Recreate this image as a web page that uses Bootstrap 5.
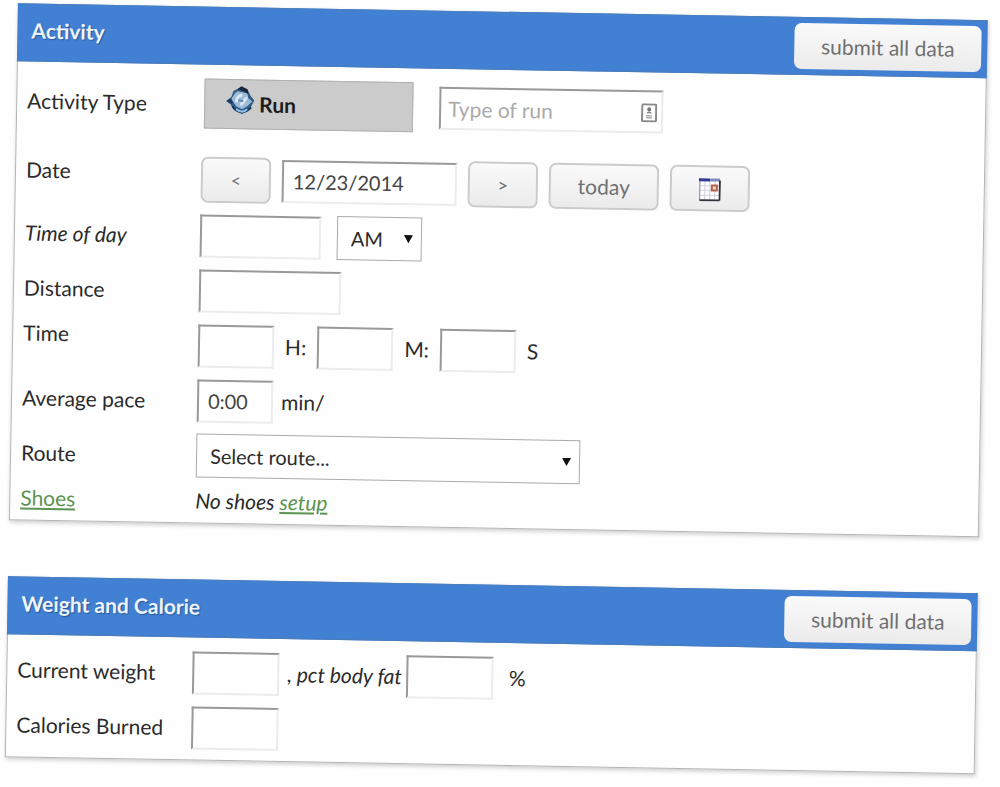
<!DOCTYPE html>
<html lang="en">
<head>
<meta charset="utf-8">
<meta name="viewport" content="width=device-width, initial-scale=1">
<title>Activity log</title>
<link href="https://cdn.jsdelivr.net/npm/bootstrap@5.3.0/dist/css/bootstrap.min.css" rel="stylesheet">
<style>
body { background: #fefefe; color: #2b2b2b; font: 21px/24px Lato, sans-serif; }
.log-form { padding: 3px 12px 12px 18px; gap: 56px; transform: rotate(1deg); transform-origin: 0 0; }
.panel { border: 1px solid #b4b4b4; border-top: 0; box-shadow: 1px 2px 4px rgba(0,0,0,.2); background: #fefefe; }
.panel-title { background: #4180d2; height: 58px; margin: 0 -1px; padding: 0 6px 0 14px; border-top: 1px solid #4b7fc0; border-bottom: 1px solid #4b7cb8; }
.panel-title h2 { font-size: 21px; line-height: 24px; font-weight: 700; color: #eef5ff; text-shadow: 1px 1px 1px rgba(20,50,100,.5); }
.panel-rows { padding: 13px 10px 10px; gap: 11px; }
.field-set { gap: 11px; }
.entry { min-height: 44px; }
.entry-name { width: 175px; flex: none; }
.entry-tall { min-height: 52px; margin-bottom: 16px; }
.entry-short { min-height: 24px; }
.soft-btn { height: 46px; border: 2px solid #cbcbcb; border-radius: 7px; background: linear-gradient(#fafafa, #ebebeb); color: #707070; font-size: 21px; line-height: 24px; padding: 0; }
.soft-btn:hover { background: #e9e9e9; color: #555; border-color: #bbb; }
.w-step { width: 70px; font-size: 18px; }
.w-today { width: 110px; }
.w-cal { width: 80px; }
.w-submit { width: 187px; border: 0; }
.sunk { height: 43px; border: 2px solid; border-color: #999 #ececec #ececec #999; border-radius: 0; background: #fff; color: #444; font-size: 20px; padding: 0 9px; }
.sunk::placeholder { color: #aaa; opacity: 1; }
.w-76 { width: 76px; }
.w-87 { width: 87px; }
.w-121 { width: 121px; }
.w-142 { width: 142px; }
.w-date { width: 175px; }
.w-kind { width: 224px; padding: 0 32px 0 7px; font-size: 21px; }
.kind-icon { right: 6px; top: 13px; }
.run-group { gap: 26px; margin-left: 2px; }
.run-btn { width: 209px; height: 50px; border: 1px solid #b0b0b0; background: #cbcbcb; color: #1c1c1c; font-weight: 700; font-size: 21px; line-height: 24px; padding: 0 20px; }
.pick { height: 44px; border: 1px solid #aaa; background: #fff; color: #2b2b2b; font-size: 20px; padding: 0 13px; appearance: none; }
.pick-mark { right: 8px; top: 17px; pointer-events: none; }
.w-ampm { width: 85px; }
.w-route { width: 384px; max-width: 100%; }
.log-form a { color: #5d9453; }
</style>
</head>
<body class="min-vh-100">
<form class="log-form d-flex flex-column">
  <section class="panel">
    <div class="panel-title d-flex align-items-center justify-content-between">
      <h2 class="m-0 pb-1">Activity</h2>
      <button type="button" class="soft-btn w-submit">submit all data</button>
    </div>
    <div class="panel-rows d-flex flex-column">
      <div class="entry entry-tall d-flex align-items-center">
        <span class="entry-name">Activity Type</span>
        <div class="run-group d-flex align-items-center">
          <button type="button" class="run-btn d-flex align-items-center">
            <svg width="30" height="30" viewBox="0 0 30 30" class="mb-2 me-1" aria-hidden="true">
              <path d="M1 16 6 12 8 6 15 2 22 4 25 10 29 15 25 23 17 29 9 25 5 19Z" fill="#315a87"/>
              <path d="M1 16 6 13 9 16 6 19Z" fill="#1f3c60"/>
              <path d="M6 14 9 9 12 6 17 7 22 8 23 13 27 16 22 21 17 24 11 21 8 17Z" fill="#9dbbd7"/>
              <path d="M12 4 16 1 22 4 23 9 18 6Z" fill="#18263a"/>
              <path d="M11 17c0-5 3-7 6-7M15 19c4 0 3-6 7-6" fill="none" stroke="#dbe9f6" stroke-width="3"/>
              <path d="M13 15l5 1" stroke="#6b8db0" stroke-width="2"/>
              <path d="M7 21c5 7 13 8 19 1" fill="none" stroke="#17375c" stroke-width="2"/>
              <path d="M11 24c4 3 8 3 11 0" fill="none" stroke="#8fc0e4" stroke-width="2"/>
            </svg>Run
          </button>
          <div class="position-relative">
            <input class="sunk w-kind" type="text" placeholder="Type of run" aria-label="Type of run">
            <svg class="kind-icon position-absolute" width="16" height="19" viewBox="0 0 16 19" aria-hidden="true">
              <rect x="1" y="1" width="14" height="17" rx="1" fill="#fff" stroke="#888" stroke-width="2"/>
              <circle cx="8" cy="6" r="2" fill="#777"/><path d="M5 10q3-4 6 0zM5 12h6v1H5zM5 14h6v1H5z" fill="#888"/>
            </svg>
          </div>
        </div>
      </div>
      <div class="entry d-flex align-items-center">
        <label class="entry-name align-self-start pt-1" for="date">Date</label>
        <div class="field-set d-flex align-items-center">
          <button type="button" class="soft-btn w-step" aria-label="Previous day">&lt;</button>
          <input class="sunk w-date" id="date" type="text" value="12/23/2014">
          <button type="button" class="soft-btn w-step" aria-label="Next day">&gt;</button>
          <button type="button" class="soft-btn w-today">today</button>
          <button type="button" class="soft-btn w-cal" aria-label="Choose a date">
            <svg width="22" height="24" viewBox="0 0 22 24" aria-hidden="true">
              <path d="M1 1h20v22H1z" fill="#fff"/>
              <path d="M1 8.500h20M1 13h20M1 18h20M6 3v20M11 3v20M16 3v20" stroke="#d3cfdd"/>
              <path d="M1 1v22" stroke="#8585a8"/>
              <path d="M0 1h11v3H0z" fill="#303a93"/><path d="M11 1h10v3H11z" fill="#8189bf"/>
              <path d="M21 3v20M1 23h20" stroke="#36323b" stroke-width="2"/>
              <rect x="13" y="8" width="5" height="5" fill="#f0dfc0" stroke="#b8604e" stroke-width="2"/>
            </svg>
          </button>
        </div>
      </div>
      <div class="entry d-flex align-items-center">
        <label class="entry-name" for="tod"><em>Time of day</em></label>
        <input class="sunk w-121 me-3" id="tod" type="text">
        <div class="position-relative">
          <select class="pick w-ampm" aria-label="AM or PM"><option>AM</option><option>PM</option></select>
          <svg class="pick-mark position-absolute" width="10" height="10" viewBox="0 0 10 10" aria-hidden="true"><path d="M0 1h9L4.500 9z" fill="#111"/></svg>
        </div>
      </div>
      <div class="entry d-flex align-items-center">
        <label class="entry-name" for="dist">Distance</label>
        <input class="sunk w-142" id="dist" type="text">
      </div>
      <div class="entry d-flex align-items-center">
        <label class="entry-name align-self-start" for="hh">Time</label>
        <div class="field-set d-flex align-items-center">
          <input class="sunk w-76" id="hh" type="text"><label for="hh">H:</label>
          <input class="sunk w-76" id="mm" type="text"><label for="mm">M:</label>
          <input class="sunk w-76" id="ss" type="text"><label for="ss">S</label>
        </div>
      </div>
      <div class="entry d-flex align-items-center">
        <label class="entry-name" for="pace">Average pace</label>
        <input class="sunk w-76 me-2" id="pace" type="text" value="0:00"><span>min/</span>
      </div>
      <div class="entry d-flex align-items-center">
        <label class="entry-name" for="route">Route</label>
        <div class="position-relative">
          <select class="pick w-route" id="route"><option>Select route...</option></select>
          <svg class="pick-mark position-absolute" width="10" height="10" viewBox="0 0 10 10" aria-hidden="true"><path d="M0 1h9L4.500 9z" fill="#111"/></svg>
        </div>
      </div>
      <div class="entry-short d-flex align-items-center">
        <span class="entry-name"><a href="#">Shoes</a></span>
        <em>No shoes <a href="#">setup</a></em>
      </div>
    </div>
  </section>
  <section class="panel">
    <div class="panel-title d-flex align-items-center justify-content-between">
      <h2 class="m-0 pb-1">Weight and Calorie</h2>
      <button type="button" class="soft-btn w-submit">submit all data</button>
    </div>
    <div class="panel-rows d-flex flex-column">
      <div class="entry d-flex align-items-center">
        <label class="entry-name" for="weight">Current weight</label>
        <input class="sunk w-87 me-2" id="weight" type="text">
        <label for="fat"><em>, pct body fat</em></label>
        <input class="sunk w-87 ms-1 me-3" id="fat" type="text"><span>%</span>
      </div>
      <div class="entry d-flex align-items-center">
        <label class="entry-name" for="cal">Calories Burned</label>
        <input class="sunk w-87" id="cal" type="text">
      </div>
    </div>
  </section>
</form>
<script src="https://cdn.jsdelivr.net/npm/bootstrap@5.3.0/dist/js/bootstrap.bundle.min.js"></script>
</body>
</html>
